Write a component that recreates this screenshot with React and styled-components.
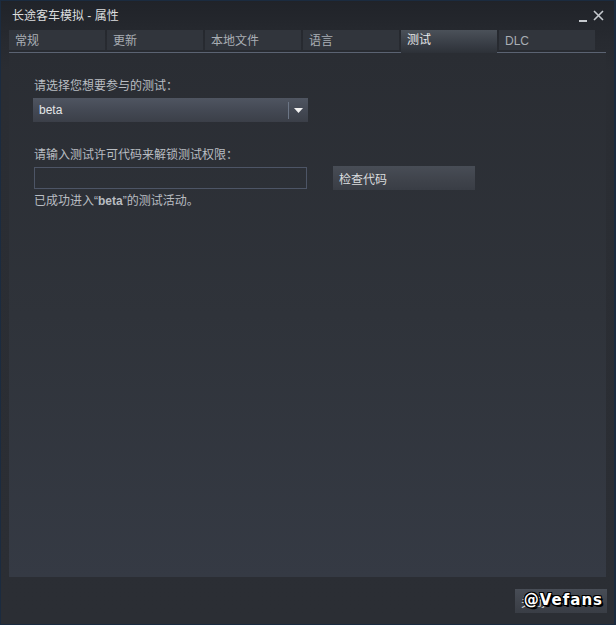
import React from "react";
import styled, { createGlobalStyle } from "styled-components";

const Global = createGlobalStyle`
  html, body { margin: 0; padding: 0; background: #23262c; }
  body { font-family: "Liberation Sans", "Noto Sans CJK SC", sans-serif; font-size: 12px; }
  * { box-sizing: border-box; }
`;

const Window = styled.div`
  width: 616px;
  height: 625px;
  border: 1px solid #1b2b3f;
  border-right-width: 2px;
  background: linear-gradient(180deg, #202329 0px, #272a30 40px, #2a2d33 70px, #2b2e34 100%);
  display: flex;
  flex-direction: column;
  position: relative;
`;

const TitleBar = styled.div`
  height: 29px;
  display: flex;
  align-items: center;
  padding: 0 10px 0 11px;
`;

const Title = styled.div`
  flex: 1;
  color: #dcdedf;
  font-size: 12px;
  line-height: 16px;
`;

const Controls = styled.div`
  display: flex;
  align-items: center;
  gap: 6px;
  color: #c5c9ce;
`;

const TabStrip = styled.div`
  margin: 0 8px;
  height: 23px;
  display: flex;
  align-items: flex-start;
  gap: 2px;
  border-bottom: 1px solid #5b6372;
`;

const Tab = styled.div`
  width: 96px;
  height: ${(p) => (p.$active ? "23px" : "20px")};
  padding-left: 6px;
  display: flex;
  align-items: ${(p) => (p.$active ? "flex-start" : "center")};
  padding-top: ${(p) => (p.$active ? "3px" : "1px")};
  font-size: 12px;
  line-height: 14px;
  color: ${(p) => (p.$active ? "#e6e8ea" : "#a9aeb4")};
  background: ${(p) =>
    p.$active
      ? "linear-gradient(180deg, #4b5159 0%, #3a3f47 55%, #2d3138 100%)"
      : "#31353c"};
`;

const Panel = styled.div`
  margin: 0 8px;
  flex: 1;
  background: linear-gradient(180deg, #2a2d33 0%, #2f333a 50%, #353a44 100%);
  padding: 25px 24px 0 24px;
  display: flex;
  flex-direction: column;
`;

const Label = styled.div`
  color: #b9bdc2;
  font-size: 12px;
  line-height: 16px;
  margin-top: ${(p) => p.$mt || 0}px;
  padding-left: 1px;
`;

const Select = styled.div`
  margin-top: 4px;
  width: 275px;
  height: 24px;
  display: flex;
  align-items: center;
  background: linear-gradient(180deg, #4f5561 0%, #444954 50%, #3b3f48 100%);
  color: #e4e6e8;
  font-size: 12px;
`;

const SelectValue = styled.div`
  flex: 1;
  padding-left: 6px;
`;

const SelectDivider = styled.div`
  width: 1px;
  height: 17px;
  background: #6c7686;
`;

const SelectArrow = styled.div`
  width: 19px;
  display: flex;
  justify-content: center;
  align-items: center;
`;

const Row = styled.div`
  margin-top: 3px;
  display: flex;
  align-items: center;
  gap: 26px;
`;

const Input = styled.div`
  width: 273px;
  height: 22px;
  margin-left: 1px;
  border: 1px solid #4d5566;
  background: transparent;
`;

const Button = styled.div`
  width: ${(p) => p.$w || 142}px;
  height: 24px;
  display: flex;
  align-items: center;
  padding-left: 6px;
  color: #dcdedf;
  font-size: 12px;
  background: linear-gradient(180deg, #484d56 0%, #3f434b 60%, #393d45 100%);
`;

const Status = styled.div`
  margin-top: 3px;
  padding-left: 1px;
  color: #b9bdc2;
  font-size: 12px;
  line-height: 16px;
`;

const Strong = styled.b`
  font-weight: bold;
`;

const Footer = styled.div`
  height: 47px;
  display: flex;
  justify-content: flex-end;
  align-items: flex-start;
  padding: 12px 7px 0 0;
  position: relative;
`;

const Watermark = styled.div`
  position: absolute;
  right: 11px;
  top: 14px;
  font-family: "DejaVu Sans", sans-serif;
  font-weight: bold;
  font-size: 15px;
  letter-spacing: 1px;
  color: #ffffff;
  text-shadow: -1px -1px 0 #000, 1px -1px 0 #000, -1px 1px 0 #000, 1px 1px 0 #000,
    0 1px 0 #000, 0 -1px 0 #000, 1px 0 0 #000, -1px 0 0 #000, 2px 2px 0 #000;
`;

const tabs = ["常规", "更新", "本地文件", "语言", "测试", "DLC"];

export default function App() {
  return (
    <>
      <Global />
      <Window>
        <TitleBar>
          <Title>长途客车模拟 - 属性</Title>
          <Controls>
            <svg width="8" height="14" viewBox="0 0 8 14">
              <rect x="0" y="11" width="8" height="2" fill="#c5c9ce" />
            </svg>
            <svg width="11" height="11" viewBox="0 0 11 11">
              <path d="M1 1 L10 10 M10 1 L1 10" stroke="#c5c9ce" strokeWidth="1.6" />
            </svg>
          </Controls>
        </TitleBar>
        <TabStrip>
          {tabs.map((t) => (
            <Tab key={t} $active={t === "测试"}>
              {t}
            </Tab>
          ))}
        </TabStrip>
        <Panel>
          <Label>请选择您想要参与的测试：</Label>
          <Select>
            <SelectValue>beta</SelectValue>
            <SelectDivider />
            <SelectArrow>
              <svg width="9" height="5" viewBox="0 0 9 5">
                <path d="M0 0 H9 L4.5 5 Z" fill="#f2f2f2" />
              </svg>
            </SelectArrow>
          </Select>
          <Label $mt={25}>请输入测试许可代码来解锁测试权限：</Label>
          <Row>
            <Input />
            <Button>检查代码</Button>
          </Row>
          <Status>
            已成功进入“<Strong>beta</Strong>”的测试活动。
          </Status>
        </Panel>
        <Footer>
          <Button $w={92}>关闭</Button>
          <Watermark>@Vefans</Watermark>
        </Footer>
      </Window>
    </>
  );
}
